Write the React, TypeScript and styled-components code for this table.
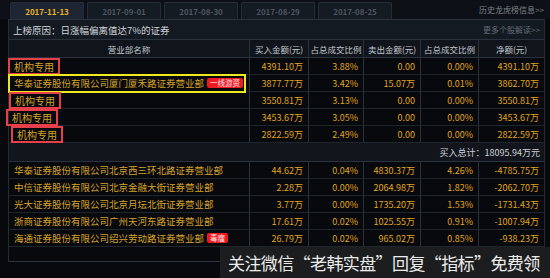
import React from 'react';
import styled, { createGlobalStyle } from 'styled-components';

const GlobalStyle = createGlobalStyle`
	html, body {
		margin: 0;
		padding: 0;
		background: #07090c;
	}
	body {
		font-family: 'Noto Sans CJK SC', 'Liberation Sans', sans-serif;
	}
`;

const Page = styled.div`
	position: relative;
	width: 550px;
	height: 278px;
	overflow: hidden;
	background: #07090c;
`;

const TabBar = styled.div`
	display: flex;
	align-items: flex-end;
	height: 19px;
	padding-left: 10px;
	gap: 3px;
	background: #0d1117;
`;

const Tab = styled.div<{ $active?: boolean }>`
	width: 72px;
	height: 16px;
	display: flex;
	align-items: center;
	justify-content: center;
	font-size: 8px;
	font-weight: 700;
	color: ${(p) => (p.$active ? '#e6b422' : '#4d5560')};
	background: ${(p) => (p.$active ? '#1d2632' : '#151b23')};
	border: 1px solid #252d38;
	border-bottom: none;
	border-radius: 2px 2px 0 0;
`;

const TopLink = styled.div`
	margin-left: auto;
	align-self: center;
	padding-right: 6px;
	font-size: 8px;
	color: #7d838b;
`;

const Frame = styled.div`
	margin-left: 8px;
	width: 535px;
	border-left: 1px solid #252b33;
	border-right: 1px solid #252b33;
`;

const Reason = styled.div`
	display: flex;
	align-items: center;
	height: 19px;
	padding: 0 4px;
	background: #141a22;
	border-top: 1px solid #2a323d;
	font-size: 9.5px;
	color: #d2d5d9;
`;

const MoreLink = styled.span`
	margin-left: auto;
	font-size: 8px;
	color: #626a74;
`;

const Grid = styled.div`
	display: grid;
	grid-template-columns: 240px 59px 55px 57px 58px 1fr;
`;

const Head = styled.div`
	height: 17px;
	display: flex;
	align-items: center;
	justify-content: center;
	background: #10151c;
	border-top: 1px solid #2a323d;
	border-bottom: 1px solid #2a323d;
	border-left: 1px solid #2a323d;
	font-size: 8.5px;
	color: #c3c7cc;
	&:first-child {
		border-left: none;
	}
`;

const Cell = styled.div<{ $first?: boolean; $flush?: boolean }>`
	height: 17px;
	display: flex;
	align-items: center;
	justify-content: ${(p) => (p.$first ? 'flex-start' : 'flex-end')};
	padding: ${(p) => (p.$flush ? '0' : p.$first ? '0 0 0 5px' : '0 5px 0 0')};
	border-bottom: 1px solid #1f252d;
	border-left: ${(p) => (p.$first ? 'none' : '1px solid #2a323d')};
	box-sizing: border-box;
	font-size: 9px;
	color: #e0a51c;
	white-space: nowrap;
`;

const NameText = styled.span`
	color: #d6a42a;
	font-size: 9.5px;
`;

const RedMark = styled.span<{ $shift: number }>`
	display: inline-flex;
	align-items: center;
	height: 17px;
	box-sizing: border-box;
	margin-left: ${(p) => p.$shift}px;
	padding: 0 4px;
	border: 2px solid #e8404a;
	font-size: 10px;
	color: #d6a42a;
`;

const YellowMark = styled.span`
	display: inline-flex;
	align-items: center;
	width: 238px;
	height: 19px;
	box-sizing: border-box;
	margin-left: -6px;
	padding-left: 4px;
	border: 2px solid #ecea1e;
	font-size: 9.5px;
	color: #d6a42a;
`;

const Badge = styled.span`
	display: inline-block;
	margin-left: 3px;
	padding: 0 3px;
	height: 10px;
	line-height: 10px;
	border-radius: 2px;
	background: #ee1a22;
	color: #ffe6e6;
	font-size: 7.5px;
`;

const TotalRow = styled.div`
	height: 18px;
	display: flex;
	align-items: center;
	justify-content: flex-end;
	padding-right: 4px;
	background: #12161c;
	border-bottom: 1px solid #2a323d;
	font-size: 9px;
	color: #cfd2d6;
`;

const Tail = styled.div`
	height: 14px;
	border-bottom: 1px solid #2a323d;
`;

const Watermark = styled.div`
	position: absolute;
	left: 220px;
	top: 247px;
	right: 0;
	bottom: 0;
	display: flex;
	align-items: center;
	padding-left: 8px;
	background: #1c1d1f;
	color: #ececec;
	font-size: 17px;
	letter-spacing: -0.6px;
	white-space: nowrap;
	overflow: hidden;
`;

type Row = {
	name: string;
	mark?: 'red' | 'yellow';
	shift?: number;
	badge?: string;
	values: string[];
};

const buyRows: Row[] = [
	{ name: '机构专用', mark: 'red', shift: -1, values: ['4391.10万', '3.88%', '0.00', '0.00%', '4391.10万'] },
	{ name: '华泰证券股份有限公司厦门厦禾路证券营业部', mark: 'yellow', badge: '一线游资', values: ['3877.77万', '3.42%', '15.07万', '0.01%', '3862.70万'] },
	{ name: '机构专用', mark: 'red', shift: 0, values: ['3550.81万', '3.13%', '0.00', '0.00%', '3550.81万'] },
	{ name: '机构专用', mark: 'red', shift: -3, values: ['3453.67万', '3.05%', '0.00', '0.00%', '3453.67万'] },
	{ name: '机构专用', mark: 'red', shift: 2, values: ['2822.59万', '2.49%', '0.00', '0.00%', '2822.59万'] },
];

const sellRows: Row[] = [
	{ name: '华泰证券股份有限公司北京西三环北路证券营业部', values: ['44.62万', '0.04%', '4830.37万', '4.26%', '-4785.75万'] },
	{ name: '中信证券股份有限公司北京金融大街证券营业部', values: ['2.28万', '0.00%', '2064.98万', '1.82%', '-2062.70万'] },
	{ name: '光大证券股份有限公司北京月坛北街证券营业部', values: ['3.77万', '0.00%', '1735.20万', '1.53%', '-1731.43万'] },
	{ name: '浙商证券股份有限公司广州天河东路证券营业部', values: ['17.61万', '0.02%', '1025.55万', '0.91%', '-1007.94万'] },
	{ name: '海通证券股份有限公司绍兴劳动路证券营业部', badge: '毒瘤', values: ['26.79万', '0.02%', '965.02万', '0.85%', '-938.23万'] },
];

const tabs = ['2017-11-13', '2017-09-01', '2017-08-30', '2017-08-29', '2017-08-25'];
const heads = ['营业部名称', '买入金额(元)', '占总成交比例', '卖出金额(元)', '占总成交比例', '净额(元)'];

function NameCell({ row }: { row: Row }) {
	if (row.mark === 'red') {
		return (
			<Cell $first $flush>
				<RedMark $shift={row.shift ?? 0}>{row.name}</RedMark>
			</Cell>
		);
	}
	if (row.mark === 'yellow') {
		return (
			<Cell $first>
				<YellowMark>
					{row.name}
					{row.badge && <Badge>{row.badge}</Badge>}
				</YellowMark>
			</Cell>
		);
	}
	return (
		<Cell $first>
			<NameText>{row.name}</NameText>
			{row.badge && <Badge>{row.badge}</Badge>}
		</Cell>
	);
}

function Rows({ rows }: { rows: Row[] }) {
	return (
		<Grid>
			{rows.map((r, i) => (
				<React.Fragment key={i}>
					<NameCell row={r} />
					{r.values.map((v, j) => (
						<Cell key={j}>{v}</Cell>
					))}
				</React.Fragment>
			))}
		</Grid>
	);
}

export default function App() {
	return (
		<Page>
			<GlobalStyle />
			<TabBar>
				{tabs.map((t, i) => (
					<Tab key={t} $active={i === 0}>
						{t}
					</Tab>
				))}
				<TopLink>历史龙虎榜信息&gt;&gt;</TopLink>
			</TabBar>
			<Frame>
				<Reason>
					上榜原因：日涨幅偏离值达7%的证券
					<MoreLink>更多个股解读&gt;&gt;</MoreLink>
				</Reason>
				<Grid>
					{heads.map((h, i) => (
						<Head key={i}>{h}</Head>
					))}
				</Grid>
				<Rows rows={buyRows} />
				<TotalRow>买入总计：18095.94万元</TotalRow>
				<Rows rows={sellRows} />
				<Tail />
			</Frame>
			<Watermark>关注微信“老韩实盘”回复“指标”免费领</Watermark>
		</Page>
	);
}
